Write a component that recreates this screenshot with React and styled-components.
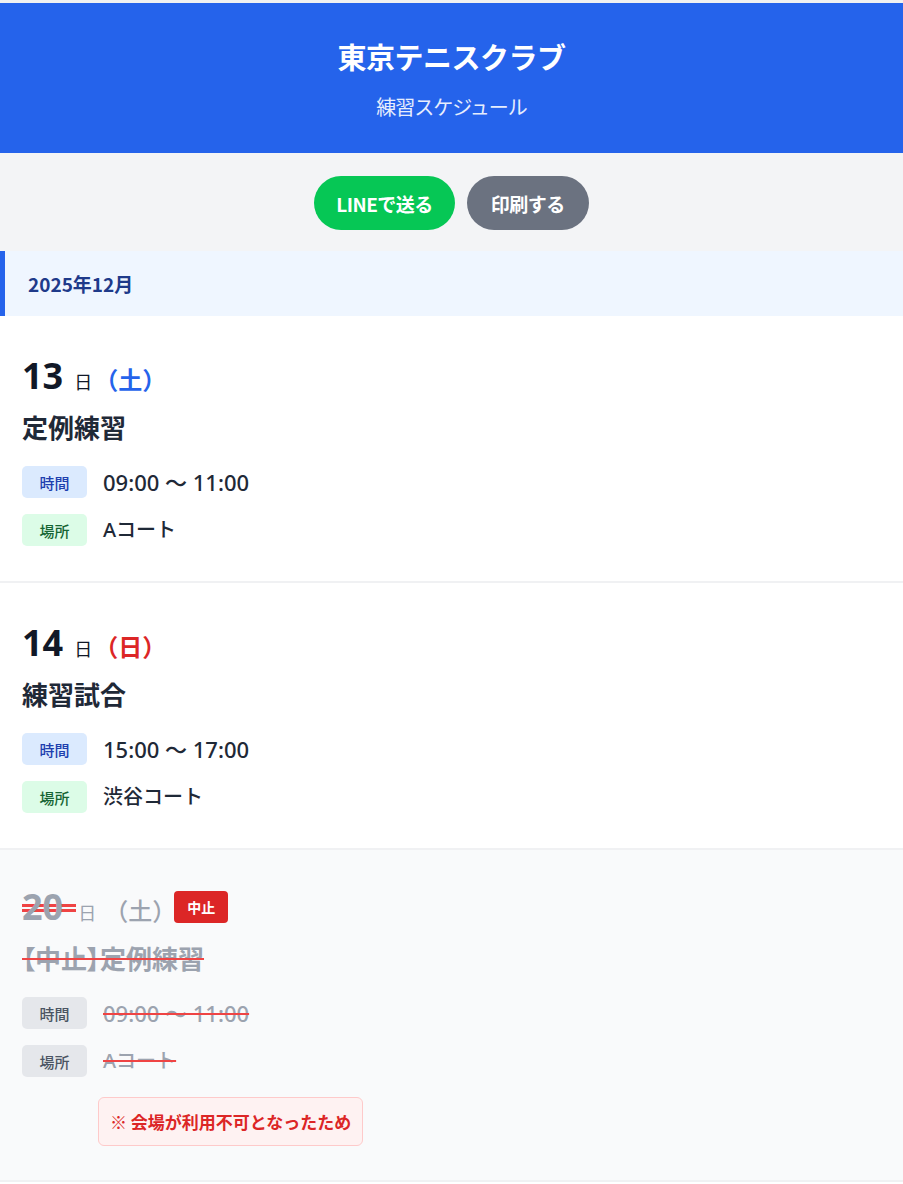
import React from "react";
import styled, { createGlobalStyle, css } from "styled-components";

const GlobalStyle = createGlobalStyle`
  body {
    margin: 0;
    background: #ffffff;
    font-family: "Noto Sans", "Noto Sans CJK JP", sans-serif;
    color: #1f2937;
  }
  * {
    box-sizing: border-box;
  }
`;

const Page = styled.div`
  border-top: 3px solid #f1f1f1;
  background: #ffffff;
`;

const Header = styled.header`
  background: #2563eb;
  color: #ffffff;
  text-align: center;
  height: 150px;
  padding-top: 33px;
`;

const Title = styled.h1`
  margin: 0;
  font-size: 29px;
  font-weight: 700;
  line-height: 40px;
  font-family: "Noto Sans CJK JP", sans-serif;
  letter-spacing: -0.5px;
`;

const Subtitle = styled.p`
  margin: 16px 0 0;
  font-size: 20px;
  line-height: 30px;
  color: #e6edfd;
  font-family: "Noto Sans CJK JP", sans-serif;
  letter-spacing: -1px;
`;

const Toolbar = styled.div`
  background: #f3f4f6;
  display: flex;
  justify-content: center;
  gap: 12px;
  padding: 23px 0 21px;
`;

const Button = styled.button`
  height: 54px;
  border: none;
  border-radius: 27px;
  padding: 0 ${(p) => (p.$variant === "line" ? "22px" : "24px")};
  font-family: "Noto Sans CJK JP", sans-serif;
  font-size: 19px;
  font-weight: 700;
  letter-spacing: -0.5px;
  color: #ffffff;
  background: ${(p) => (p.$variant === "line" ? "#06c755" : "#6b7280")};
  cursor: pointer;
`;

const MonthHeader = styled.h2`
  margin: 0;
  height: 65px;
  display: flex;
  align-items: center;
  background: #eff6ff;
  border-left: 5px solid #2563eb;
  padding-left: 23px;
  font-size: 19px;
  font-weight: 700;
  color: #1e3a8a;
  font-family: "Noto Sans CJK JP", sans-serif;
`;

const Card = styled.section`
  padding: ${(p) => (p.$cancelled ? "33px 22px 34px" : "36px 22px 35px")};
  border-bottom: 2px solid #f0f1f3;
  background: ${(p) => (p.$cancelled ? "#f9fafb" : "#ffffff")};
`;

const strike = css`
  text-decoration: line-through;
  text-decoration-color: #ef4444;
  text-decoration-thickness: 2px;
`;

const DateRow = styled.div`
  display: flex;
  align-items: baseline;
  height: 48px;
`;

const Day = styled.span`
  font-size: 36px;
  font-weight: 700;
  line-height: 48px;
  color: ${(p) => (p.$cancelled ? "#9ca3af" : "#111827")};
  ${(p) =>
    p.$cancelled &&
    css`
      padding-right: 13px;
      background: linear-gradient(
        to bottom,
        transparent 21px,
        #ef4444 21px,
        #ef4444 24px,
        transparent 24px,
        transparent 26px,
        #ef4444 26px,
        #ef4444 29px,
        transparent 29px
      );
    `}
`;

const DayUnit = styled.span`
  font-family: "Noto Sans CJK JP", sans-serif;
  font-size: 18px;
  margin-left: ${(p) => (p.$cancelled ? "2px" : "11px")};
  color: ${(p) => (p.$cancelled ? "#9ca3af" : "#111827")};
`;

const Weekday = styled.span`
  font-family: "Noto Sans CJK JP", sans-serif;
  font-size: 24px;
  font-weight: ${(p) => (p.$cancelled ? 500 : 700)};
  margin-left: ${(p) => (p.$cancelled ? "8px" : "2px")};
  color: ${(p) => p.$color};
`;

const Badge = styled.span`
  align-self: center;
  margin-left: -2px;
  height: 32px;
  padding: 0 13px;
  display: inline-flex;
  align-items: center;
  border-radius: 4px;
  background: #dc2626;
  color: #ffffff;
  font-family: "Noto Sans CJK JP", sans-serif;
  font-size: 14px;
  font-weight: 700;
`;

const EventTitle = styled.h3`
  margin: 9px 0 21px;
  font-family: "Noto Sans CJK JP", sans-serif;
  font-size: 26px;
  font-weight: 700;
  line-height: 36px;
  color: ${(p) => (p.$cancelled ? "#9ca3af" : "#1f2937")};
  ${(p) =>
    p.$cancelled &&
    css`
      ${strike}
      font-feature-settings: "palt";
    `}
`;

const InfoList = styled.div`
  display: flex;
  flex-direction: column;
  gap: 16px;
`;

const InfoRow = styled.div`
  display: flex;
  align-items: center;
  gap: 16px;
`;

const tagColors = {
  time: { bg: "#dbeafe", fg: "#1e40af" },
  place: { bg: "#dcfce7", fg: "#166534" },
  off: { bg: "#e5e7eb", fg: "#4b5563" },
};

const Tag = styled.span`
  width: 65px;
  height: 32px;
  display: inline-flex;
  align-items: center;
  justify-content: center;
  border-radius: 5px;
  font-family: "Noto Sans CJK JP", sans-serif;
  font-size: 15px;
  font-weight: 500;
  background: ${(p) => tagColors[p.$kind].bg};
  color: ${(p) => tagColors[p.$kind].fg};
`;

const Value = styled.span`
  font-size: ${(p) => (p.$time ? "22px" : "20px")};
  font-weight: 500;
  line-height: 30px;
  color: ${(p) => (p.$cancelled ? "#9ca3af" : "#1f2937")};
  ${(p) => p.$cancelled && strike}
`;

const Notice = styled.div`
  margin: 20px 0 0 76px;
  display: inline-block;
  padding: 10px 11px;
  border: 1px solid #fecaca;
  border-radius: 6px;
  background: #fef2f2;
  color: #dc2626;
  font-family: "Noto Sans CJK JP", sans-serif;
  font-size: 17px;
  font-weight: 700;
  line-height: 27px;
`;

const events = [
  { day: 13, week: "土", title: "定例練習", time: "09:00 〜 11:00", place: "Aコート" },
  { day: 14, week: "日", title: "練習試合", time: "15:00 〜 17:00", place: "渋谷コート" },
  {
    day: 20,
    week: "土",
    title: "【中止】定例練習",
    time: "09:00 〜 11:00",
    place: "Aコート",
    cancelled: true,
    reason: "※ 会場が利用不可となったため",
  },
];

const weekColor = (e) => {
  if (e.cancelled) return "#9ca3af";
  if (e.week === "日") return "#dc2626";
  if (e.week === "土") return "#2563eb";
  return "#1f2937";
};

const EventCard = ({ event }) => {
  const c = event.cancelled;
  return (
    <Card $cancelled={c}>
      <DateRow>
        <Day $cancelled={c}>{event.day}</Day>
        <DayUnit $cancelled={c}>日</DayUnit>
        <Weekday $color={weekColor(event)} $cancelled={c}>
          （{event.week}）
        </Weekday>
        {c && <Badge>中止</Badge>}
      </DateRow>
      <EventTitle $cancelled={c}>{event.title}</EventTitle>
      <InfoList>
        <InfoRow>
          <Tag $kind={c ? "off" : "time"}>時間</Tag>
          <Value $cancelled={c} $time>
            {event.time}
          </Value>
        </InfoRow>
        <InfoRow>
          <Tag $kind={c ? "off" : "place"}>場所</Tag>
          <Value $cancelled={c}>{event.place}</Value>
        </InfoRow>
      </InfoList>
      {event.reason && <Notice>{event.reason}</Notice>}
    </Card>
  );
};

export default function App() {
  return (
    <Page>
      <GlobalStyle />
      <Header>
        <Title>東京テニスクラブ</Title>
        <Subtitle>練習スケジュール</Subtitle>
      </Header>
      <Toolbar>
        <Button $variant="line">LINEで送る</Button>
        <Button>印刷する</Button>
      </Toolbar>
      <MonthHeader>2025年12月</MonthHeader>
      {events.map((e) => (
        <EventCard key={e.day} event={e} />
      ))}
    </Page>
  );
}
